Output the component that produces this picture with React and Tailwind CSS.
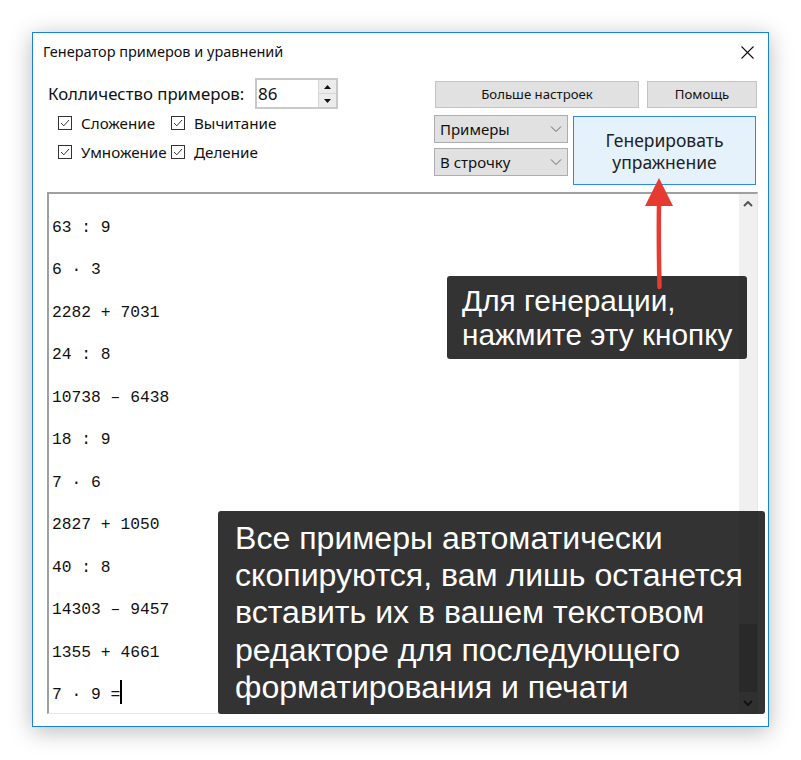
import { useState } from 'react';

const lines = [
  '63 : 9',
  '6 · 3',
  '2282 + 7031',
  '24 : 8',
  '10738 – 6438',
  '18 : 9',
  '7 · 6',
  '2827 + 1050',
  '40 : 8',
  '14303 – 9457',
  '1355 + 4661',
];

const ui = { fontFamily: '"Noto Sans", "Open Sans", sans-serif' };

function Check({ label }) {
  return (
    <label className="flex items-center gap-[9px]">
      <span className="flex h-[14px] w-[14px] items-center justify-center border border-[#333] bg-white">
        <svg width="12" height="12" viewBox="0 0 12 12">
          <path d="M2 6 L4.8 8.8 L10 3" fill="none" stroke="#333" strokeWidth="1" />
        </svg>
      </span>
      <span className="text-[15.2px] leading-[20px] text-[#111]">{label}</span>
    </label>
  );
}

function Combo({ value }) {
  return (
    <div className="flex h-[28px] items-center justify-between border border-[#adadad] bg-[#e1e1e1] pl-[5px] pr-[5px] text-[15px] text-[#111]">
      <span>{value}</span>
      <svg width="12" height="8" viewBox="0 0 12 8">
        <path d="M1 1.5 L6 6.5 L11 1.5" fill="none" stroke="#666" strokeWidth="1" />
      </svg>
    </div>
  );
}

export default function App() {
  const [count] = useState(86);

  return (
    <div className="relative h-[760px] w-[801px] overflow-hidden bg-white pl-[32px] pt-[32px]" style={ui}>
      <div className="flex h-[695px] w-[737px] flex-col border border-[#1883d7] bg-white shadow-[0_4px_22px_rgba(0,0,0,0.28)]">
        {/* заголовок окна */}
        <div className="flex h-[38px] shrink-0 items-center justify-between pl-[10px] pr-[14px]">
          <span className="text-[14.5px] text-[#111]">Генератор примеров и уравнений</span>
          <svg width="13" height="13" viewBox="0 0 13 13">
            <path d="M0.5 0.5 L12.5 12.5 M12.5 0.5 L0.5 12.5" stroke="#111" strokeWidth="1.1" />
          </svg>
        </div>

        <div className="flex h-[121px] shrink-0">
          <div className="w-[401px] pl-[15px] pt-[7px]">
            <div className="flex h-[31px] items-center">
              <span className="w-[207px] text-[16.8px] text-[#111]">Колличество примеров:</span>
              <div className="flex h-[31px] w-[83px] items-center border-2 border-[#c9c9c9] bg-white">
                <span className="flex-1 pl-[1px] text-[17px] text-[#111]">{count}</span>
                <div className="flex h-full w-[18px] flex-col border-l border-[#d6d6d6]">
                  <div className="flex flex-1 items-center justify-center border-b border-[#d6d6d6] bg-[#ececec]">
                    <svg width="7" height="4" viewBox="0 0 7 4"><path d="M3.5 0 L7 4 L0 4 Z" fill="#111" /></svg>
                  </div>
                  <div className="flex flex-1 items-center justify-center bg-[#ececec]">
                    <svg width="7" height="4" viewBox="0 0 7 4"><path d="M0 0 L7 0 L3.5 4 Z" fill="#111" /></svg>
                  </div>
                </div>
              </div>
            </div>
            <div className="ml-[10px] mt-[4px] grid grid-cols-[113px_120px] gap-y-[9px]">
              <Check label="Сложение" />
              <Check label="Вычитание" />
              <Check label="Умножение" />
              <Check label="Деление" />
            </div>
          </div>

          <div className="pt-[10px]">
            <div className="flex gap-[8px] pl-[1px]">
              <button className="h-[27px] w-[204px] border border-[#c4c4c4] bg-[#e1e1e1] text-[13.2px] text-[#111]">
                Больше настроек
              </button>
              <button className="h-[27px] w-[110px] border border-[#c4c4c4] bg-[#e1e1e1] text-[13.2px] text-[#111]">
                Помощь
              </button>
            </div>
            <div className="mt-[7px] flex gap-[5px]">
              <div className="flex w-[134px] flex-col gap-[5px]">
                <Combo value="Примеры" />
                <Combo value="В строчку" />
              </div>
              <button className="mt-[1px] h-[69px] w-[183px] border border-[#2f8ae0] bg-[#e5f1fb] text-[17.5px] leading-[22px] text-[#222]">
                Генерировать
                <br />
                упражнение
              </button>
            </div>
          </div>
        </div>

        {/* поле с примерами */}
        <div className="ml-[14px] flex h-[522px] w-[711px] border-l-2 border-t-2 border-[#a0a0a0] border-b border-r border-b-[#e8e8e8] border-r-[#e8e8e8]">
          <div
            className="flex-1 pl-[3px] pt-[13px] text-[16.3px] leading-[42.45px] text-[#111]"
            style={{ fontFamily: '"Liberation Mono", "Courier New", monospace' }}
          >
            {lines.map((l) => (
              <div key={l} className="whitespace-pre">{l}</div>
            ))}
            <div className="whitespace-pre">
              7 · 9 =<span className="inline-block h-[24px] w-[1.5px] translate-y-[5px] bg-black" />
            </div>
          </div>
          <div className="flex w-[18px] flex-col items-center justify-between bg-[#f0f0f0] py-[7px]">
            <svg width="10" height="6" viewBox="0 0 10 6"><path d="M1 5 L5 1 L9 5" fill="none" stroke="#555" strokeWidth="2" /></svg>
            <div className="mt-auto mb-[8px] h-[68px] w-full bg-[#cdcdcd]" />
            <svg width="10" height="6" viewBox="0 0 10 6"><path d="M1 1 L5 5 L9 1" fill="none" stroke="#555" strokeWidth="2" /></svg>
          </div>
        </div>
      </div>

      {/* подсказки поверх окна */}
      <div
        className="absolute left-[447px] top-[276px] h-[83px] w-[300px] whitespace-nowrap rounded-[3px] bg-black/80 pl-[15px] pt-[8px] text-[29.8px] leading-[34px] text-white"
        style={{ fontFamily: '"Liberation Sans", Arial, sans-serif' }}
      >
        Для генерации,
        <br />
        нажмите эту кнопку
      </div>

      <div
        className="absolute left-[218px] top-[511px] h-[203px] w-[547px] whitespace-nowrap rounded-[3px] bg-black/80 pl-[17px] pt-[9px] text-[32.1px] leading-[37.2px] text-white"
        style={{ fontFamily: '"Liberation Sans", Arial, sans-serif' }}
      >
        Все примеры автоматически
        <br />
        скопируются, вам лишь останется
        <br />
        вставить их в вашем текстовом
        <br />
        редакторе для последующего
        <br />
        форматирования и печати
      </div>

      <svg className="absolute left-[640px] top-[174px]" width="40" height="120" viewBox="0 0 40 120">
        <path d="M19 30 Q18.5 70 19.5 113" fill="none" stroke="#e53b30" strokeWidth="4.5" strokeLinecap="round" />
        <path d="M19 4 L33 32 L5 32 Z" fill="#e53b30" />
      </svg>
    </div>
  );
}
